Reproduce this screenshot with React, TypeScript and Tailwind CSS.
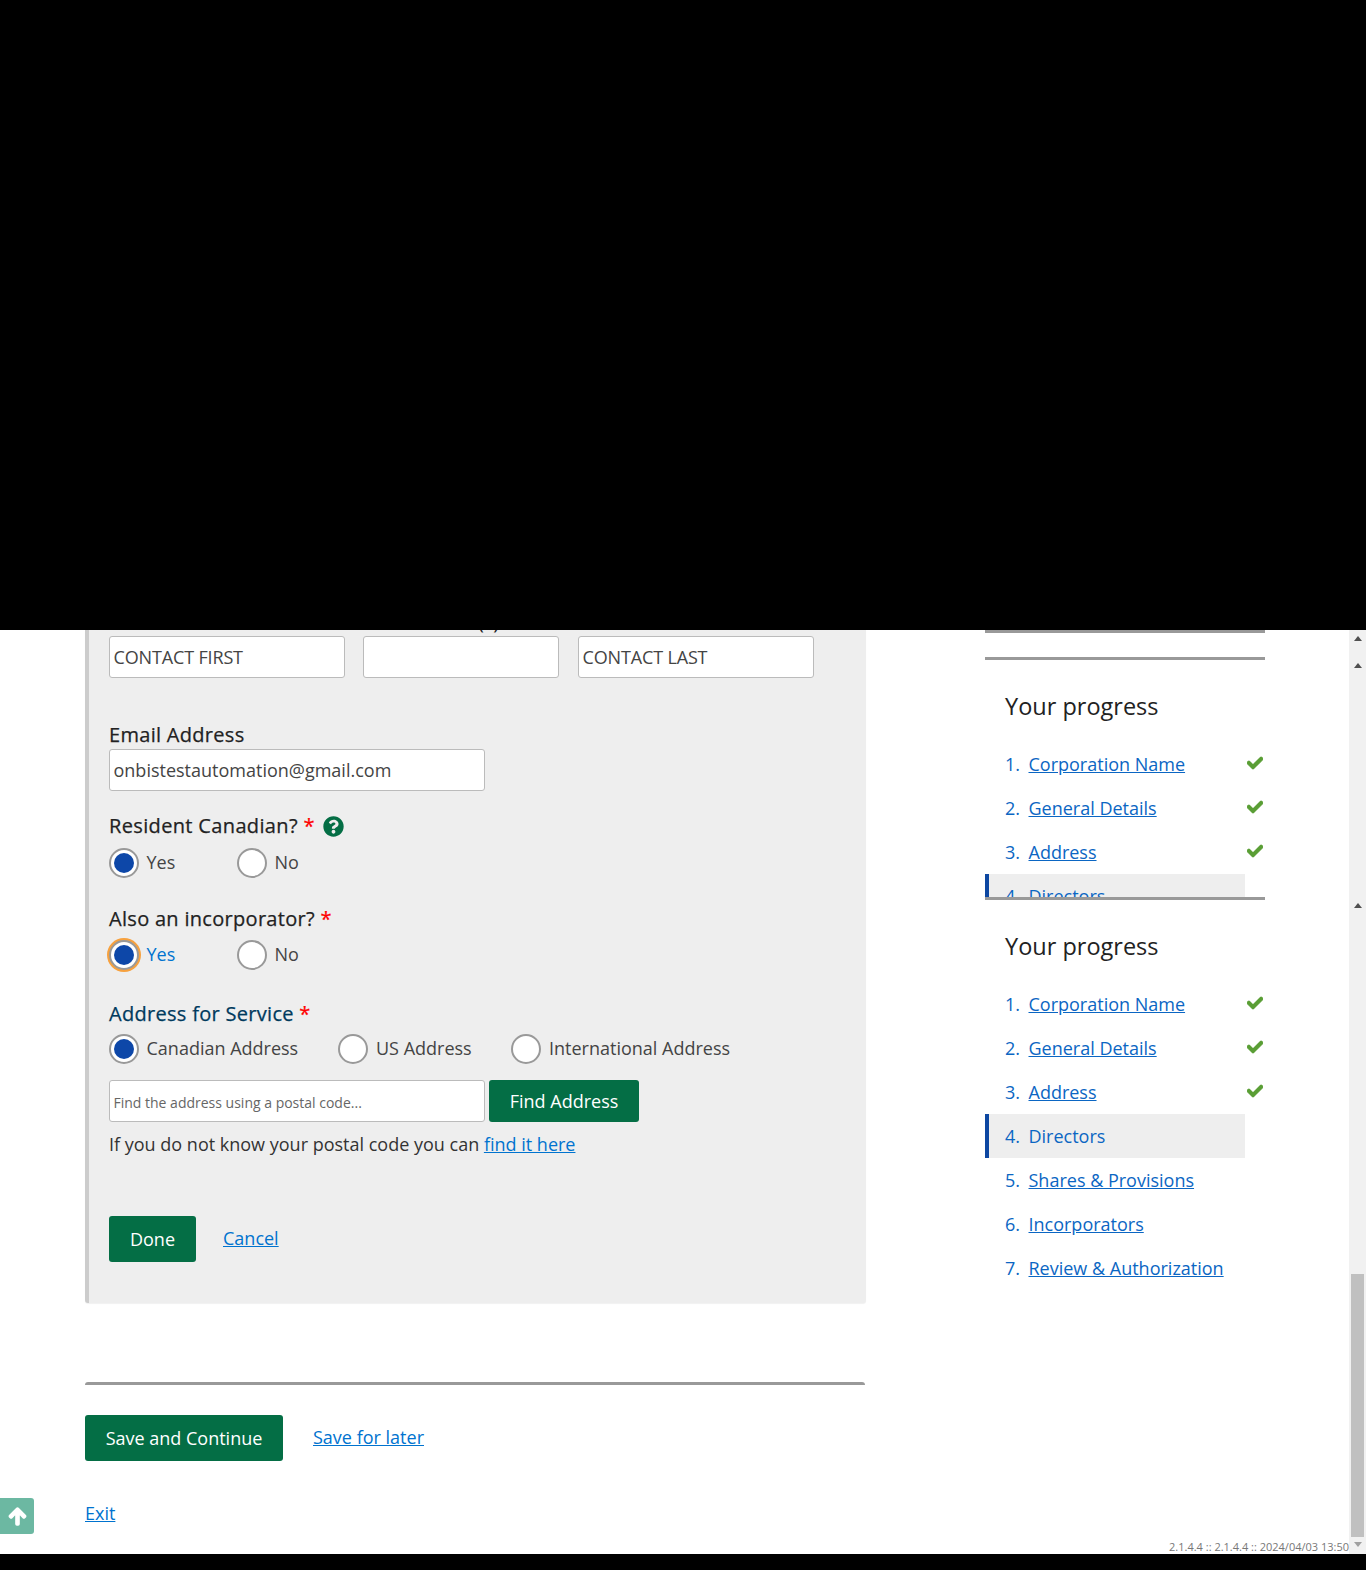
import { FaArrowUp, FaCheck, FaQuestionCircle } from "react-icons/fa";

function Radio({ label, checked, focused, wide, className = "" }: { label: string; checked?: boolean; focused?: boolean; wide?: boolean; className?: string }) {
  return (
    <div className={`flex items-center ${className}`}>
      <span
        className={`flex h-[30px] w-[30px] items-center justify-center rounded-full border-[2px] border-[#999] bg-white ${
          focused ? "shadow-[0_0_0_2px_#f7a13e]" : ""
        }`}
      >
        {checked && <span className="h-5 w-5 rounded-full bg-[#0d47a8]" />}
      </span>
      <span className={`${wide ? "ml-2" : "ml-[7.5px]"} mb-[2px] text-[18px] leading-[28px] ${focused ? "text-[#0073cf]" : "text-[#444]"}`}>{label}</span>
    </div>
  );
}

function Field({ value, className = "", small }: { value?: string; className?: string; small?: boolean }) {
  return (
    <div
      className={`flex h-[42px] items-center rounded-[3px] border border-[#bbb] bg-white px-[3.5px] ${
        small ? "pt-[2px] text-[14px] text-[#666]" : "text-[18px] text-[#444]"
      } ${className}`}
    >
      {value}
    </div>
  );
}

const Star = () => <span className="font-medium text-[#f00] [-webkit-text-stroke:0.25px_#f00]"> *</span>;

const steps: [string, boolean][] = [
  ["Corporation Name", true],
  ["General Details", true],
  ["Address", true],
  ["Directors", false],
  ["Shares & Provisions", false],
  ["Incorporators", false],
  ["Review & Authorization", false],
];

function Progress() {
  return (
    <div>
      <h2 className="pl-5 pt-[29px] text-[23.5px] leading-[34px] font-normal text-[#222]">Your progress</h2>
      <ol className="mt-[19px]">
        {steps.map(([name, done], i) => {
          const active = name === "Directors";
          return (
            <li
              key={name}
              className={`relative flex h-11 w-[260px] items-center text-[18px] text-[#0b66c3] ${
                active ? "border-l-4 border-[#0d47a1] bg-[#eee] pl-4" : "pl-5"
              }`}
            >
              <span className="w-[23.5px]">{i + 1}.</span>
              {active ? (
                <span>{name}</span>
              ) : (
                <a className="underline" href="#">
                  {name}
                </a>
              )}
              {done && <FaCheck className="absolute left-[262px] top-[13px] stroke-[35px] text-[16px] text-[#5a9e35]" />}
            </li>
          );
        })}
      </ol>
    </div>
  );
}

function ScrollArrow({ className = "" }: { className?: string }) {
  return <span className={`h-0 w-0 border-x-[4px] border-b-[5px] border-x-transparent border-b-[#505050] ${className}`} />;
}

export default function App() {
  return (
    <div className="relative flex h-[1570px] flex-col overflow-hidden bg-black font-['Open_Sans',sans-serif]">
      <div className="h-[630px] shrink-0 bg-black" />
      <div className="flex h-[924px] shrink-0 bg-white">
        <main className="ml-[85px] w-[781px]">
          <section className="h-[673px] rounded-b-[3px] border-l-4 border-[#ccc] bg-[#eee] pl-5 shadow-[0_1px_1px_rgba(0,0,0,0.06)]">
            <div className="h-[6px] overflow-hidden">
              <div className="ml-[244px] mt-[-22px] h-[28px] text-[20px] leading-[28px] text-[#222]">Middle Name(s)</div>
            </div>
            <div className="flex">
              <Field value="CONTACT FIRST" className="w-[236px] tracking-[-0.15px]" />
              <Field className="ml-[18px] w-[196px]" />
              <Field className="ml-[19px] w-[236px] tracking-[-0.15px]" value="CONTACT LAST" />
            </div>
            <label className="mt-[43px] block text-[20px] font-medium leading-[28px] tracking-[0.3px] text-[#222] [-webkit-text-stroke:0.25px_#222]">Email Address</label>
            <div>
              <Field value="onbistestautomation@gmail.com" className="w-[376px]" />
            </div>
            <div className="mt-[21px] flex h-7 items-center text-[20px] font-medium leading-[28px] tracking-[0.35px] text-[#222] [-webkit-text-stroke:0.25px_#222]">
              <span className="whitespace-pre">
                Resident Canadian?
                <Star />
              </span>
              <FaQuestionCircle className="ml-2 text-[21px] text-[#046e45]" />
            </div>
            <div className="mt-[8px] flex">
              <Radio label="Yes" checked className="w-[128px]" />
              <Radio label="No" />
            </div>
            <div className="mt-[27px] h-7 whitespace-pre text-[20px] font-medium leading-[28px] tracking-[0.3px] text-[#222] [-webkit-text-stroke:0.25px_#222]">
              Also an incorporator?
              <Star />
            </div>
            <div className="mt-[7px] flex">
              <Radio label="Yes" checked focused className="w-[128px]" />
              <Radio label="No" />
            </div>
            <div className="mt-[30px] h-7 whitespace-pre text-[20px] font-medium leading-[28px] tracking-[0.3px] text-[#003a5d] [-webkit-text-stroke:0.25px_#003a5d]">
              Address for Service
              <Star />
            </div>
            <div className="mt-[6px] flex">
              <Radio label="Canadian Address" checked className="w-[229px]" />
              <Radio label="US Address" wide className="w-[173px]" />
              <Radio label="International Address" wide />
            </div>
            <div className="mt-[16px] flex">
              <Field small value="Find the address using a postal code..." className="w-[376px]" />
              <button className="ml-[4px] h-[42px] w-[150px] rounded-[3px] bg-[#046e45] text-[18px] text-white">Find Address</button>
            </div>
            <p className="mt-[8px] text-[18px] leading-[28px] text-[#333]">
              If you do not know your postal code you can{" "}
              <a href="#" className="text-[#0073cf] underline">
                find it here
              </a>
            </p>
            <div className="mt-[58px] flex items-center">
              <button className="h-[46px] w-[87px] rounded-[3px] bg-[#046e45] text-[18px] text-white">Done</button>
              <a href="#" className="mb-[2px] ml-[27px] text-[18px] text-[#0073cf] underline">
                Cancel
              </a>
            </div>
          </section>
          <hr className="mr-px mt-[79px] h-[3px] rounded-t-[3px] border-0 bg-[#999]" />
          <div className="mt-[30px] flex items-center">
            <button className="h-[46px] w-[198px] rounded-[3px] bg-[#046e45] text-[18px] text-white">Save and Continue</button>
            <a href="#" className="mb-[2px] ml-[30px] text-[18px] text-[#0073cf] underline">
              Save for later
            </a>
          </div>
          <a href="#" className="mt-[38px] block w-fit text-[18px] leading-[28px] text-[#0073cf] underline">
            Exit
          </a>
        </main>

        <aside className="ml-[119px] w-[280px]">
          <div className="h-[3px] bg-[#999]" />
          <div className="mt-[24px] h-[3px] bg-[#999]" />
          <div className="h-[237px] overflow-hidden">
            <Progress />
          </div>
          <div className="h-[3px] bg-[#999]" />
          <Progress />
        </aside>

        <div className="ml-auto flex w-[17px] flex-col items-center bg-[#f1f1f1] pt-[6px]">
          <ScrollArrow />
          <ScrollArrow className="mt-[22px]" />
          <ScrollArrow className="mt-[235px]" />
          <div className="mt-[366px] h-[263px] w-[13px] bg-[#c0c0c0]" />
          <span className="mt-[5px] h-0 w-0 border-x-[4px] border-t-[5px] border-x-transparent border-t-[#a0a0a0]" />
        </div>
      </div>
      <div className="h-4 shrink-0 bg-black" />

      <div className="absolute right-[17px] top-[1540px] text-[11px] leading-[14px] text-[#777]">2.1.4.4 :: 2.1.4.4 :: 2024/04/03 13:50</div>
      <div className="absolute left-0 top-[1498px] flex h-9 w-[34px] items-center justify-center rounded-r-[3px] bg-[#6cb8a2]">
        <FaArrowUp className="stroke-[45px] text-[19px] text-white" />
      </div>
    </div>
  );
}
